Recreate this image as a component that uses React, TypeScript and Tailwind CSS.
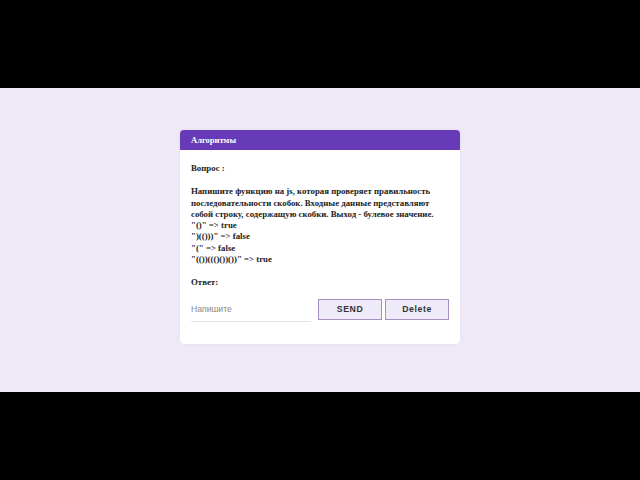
export default function App() {
  const serif = { fontFamily: '"Liberation Serif", "Times New Roman", serif' };
  const sans = { fontFamily: '"Liberation Sans", Arial, sans-serif' };
  return (
    <div className="w-[640px] h-[480px] flex flex-col bg-black">
      <div className="h-[88px] bg-black" />
      <div className="h-[304px] bg-[#ede9f7] pt-[42px] flex justify-center">
        <div className="w-[280px] h-[214px] bg-white rounded-[4px] overflow-hidden shadow-[0_0_2px_rgba(0,0,0,0.08)]" style={serif}>
          <div className="h-[20px] bg-[#673ab7] px-[11px] flex items-center">
            <span className="text-white font-bold text-[8.5px]">Алгоритмы</span>
          </div>
          <div className="px-[11px] pt-[13px] text-[8.8px] leading-[11.3px] font-bold text-[#222]">
            <div>Вопрос :</div>
            <div className="mt-[12px] w-[245px]">
              Напишите функцию на js, которая проверяет правильность последовательности скобок. Входные данные представляют собой строку, содержащую скобки. Выход - булевое значение.
            </div>
            <div>"()" =&gt; true</div>
            <div>")(()))" =&gt; false</div>
            <div>"(" =&gt; false</div>
            <div>"(())((()())())" =&gt; true</div>
            <div className="mt-[12px]">Ответ:</div>
            <div className="mt-[10px] flex items-start" style={sans}>
              <div className="w-[122px] h-[23px] border-b border-[#e4e4e4] flex items-center">
                <span className="text-[8.6px] font-normal text-[#8a8a8a]">Напишите</span>
              </div>
              <button className="ml-[7px] w-[65px] h-[21px] border border-[#a58fc4] bg-[#efeaf8] text-[8.7px] font-bold tracking-[0.6px] text-[#333] flex items-center justify-center">SEND</button>
              <button className="ml-[3px] w-[65px] h-[21px] border border-[#a58fc4] bg-[#efeaf8] text-[8.7px] font-bold tracking-[0.6px] text-[#333] flex items-center justify-center">Delete</button>
            </div>
          </div>
        </div>
      </div>
      <div className="h-[88px] bg-black" />
    </div>
  );
}
